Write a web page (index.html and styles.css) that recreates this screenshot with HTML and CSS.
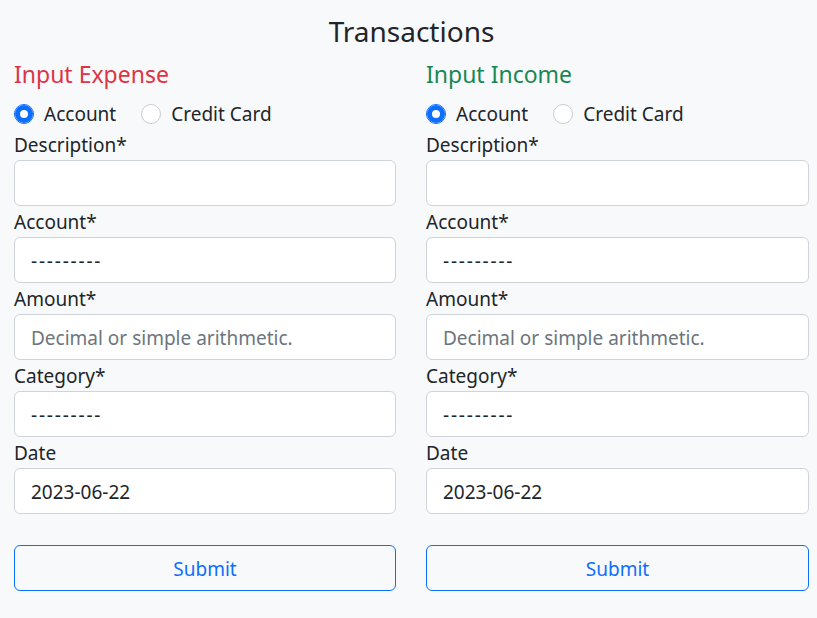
FILE: index.html
```html
<!DOCTYPE html>
<html lang="en">
<head>
<meta charset="utf-8">
<title>Transactions</title>
<link rel="stylesheet" href="styles.css">
</head>
<body>
<main class="page">
  <h1 class="title">Transactions</h1>
  <div class="columns">
    <form class="panel">
      <h2 class="panel-title expense">Input Expense</h2>
      <div class="radio-row">
        <label class="radio"><input type="radio" name="exp-src" checked><span>Account</span></label>
        <label class="radio"><input type="radio" name="exp-src"><span>Credit Card</span></label>
      </div>
      <label class="field-label">Description*</label>
      <input class="control" type="text">
      <label class="field-label">Account*</label>
      <select class="control select"><option>---------</option></select>
      <label class="field-label">Amount*</label>
      <input class="control" type="text" placeholder="Decimal or simple arithmetic.">
      <label class="field-label">Category*</label>
      <select class="control select"><option>---------</option></select>
      <label class="field-label">Date</label>
      <input class="control" type="text" value="2023-06-22">
      <button class="submit" type="button">Submit</button>
    </form>
    <form class="panel">
      <h2 class="panel-title income">Input Income</h2>
      <div class="radio-row">
        <label class="radio"><input type="radio" name="inc-src" checked><span>Account</span></label>
        <label class="radio"><input type="radio" name="inc-src"><span>Credit Card</span></label>
      </div>
      <label class="field-label">Description*</label>
      <input class="control" type="text">
      <label class="field-label">Account*</label>
      <select class="control select"><option>---------</option></select>
      <label class="field-label">Amount*</label>
      <input class="control" type="text" placeholder="Decimal or simple arithmetic.">
      <label class="field-label">Category*</label>
      <select class="control select"><option>---------</option></select>
      <label class="field-label">Date</label>
      <input class="control" type="text" value="2023-06-22">
      <button class="submit" type="button">Submit</button>
    </form>
  </div>
</main>
</body>
</html>
```

FILE: styles.css
```css
* { box-sizing: border-box; }

html, body {
  margin: 0;
  background: #f8f9fa;
}

body {
  font-family: "Noto Sans", "Open Sans", sans-serif;
  color: #212529;
  font-size: 19px;
}

.page {
  padding: 13px 8px 0 14px;
}

.title {
  margin: 0 0 10px;
  font-size: 28px;
  font-weight: 400;
  line-height: 36px;
  text-align: center;
}

.columns {
  display: grid;
  grid-template-columns: 382px 1fr;
  column-gap: 30px;
}

.panel {
  display: flex;
  flex-direction: column;
  margin: 0;
}

.panel-title {
  margin: 0 0 9px;
  font-size: 23px;
  font-weight: 400;
  line-height: 30px;
}

.expense { color: #dc3545; }
.income { color: #198754; }

.radio-row {
  display: flex;
  gap: 25px;
  height: 31px;
  align-items: center;
}

.radio {
  display: flex;
  align-items: center;
  gap: 10px;
  line-height: 30px;
}

.radio input {
  appearance: none;
  -webkit-appearance: none;
  margin: 0;
  width: 20px;
  height: 20px;
  border-radius: 50%;
  border: 1px solid #c9cdd1;
  background: #fff;
}

.radio input:checked {
  border-color: #0d6efd;
  background: #fff;
  box-shadow: inset 0 0 0 5px #0d6efd;
}

.field-label {
  display: block;
  line-height: 30px;
  height: 31px;
  padding-top: 1px;
}

.control {
  display: block;
  width: 100%;
  height: 46px;
  margin: 0;
  padding: 8px 16px 6px;
  font: inherit;
  line-height: 30px;
  color: #212529;
  background: #fff;
  border: 1px solid #ced4da;
  border-radius: 6px;
  outline: none;
}

.control::placeholder {
  color: #6c757d;
  opacity: 1;
}

.select {
  appearance: none;
  -webkit-appearance: none;
  letter-spacing: 1.8px;
}

.submit {
  margin-top: 31px;
  height: 46px;
  width: 100%;
  padding: 2px 0 0;
  font: inherit;
  line-height: 30px;
  color: #0d6efd;
  background: transparent;
  border: 1px solid #0d6efd;
  border-radius: 6px;
}
```
